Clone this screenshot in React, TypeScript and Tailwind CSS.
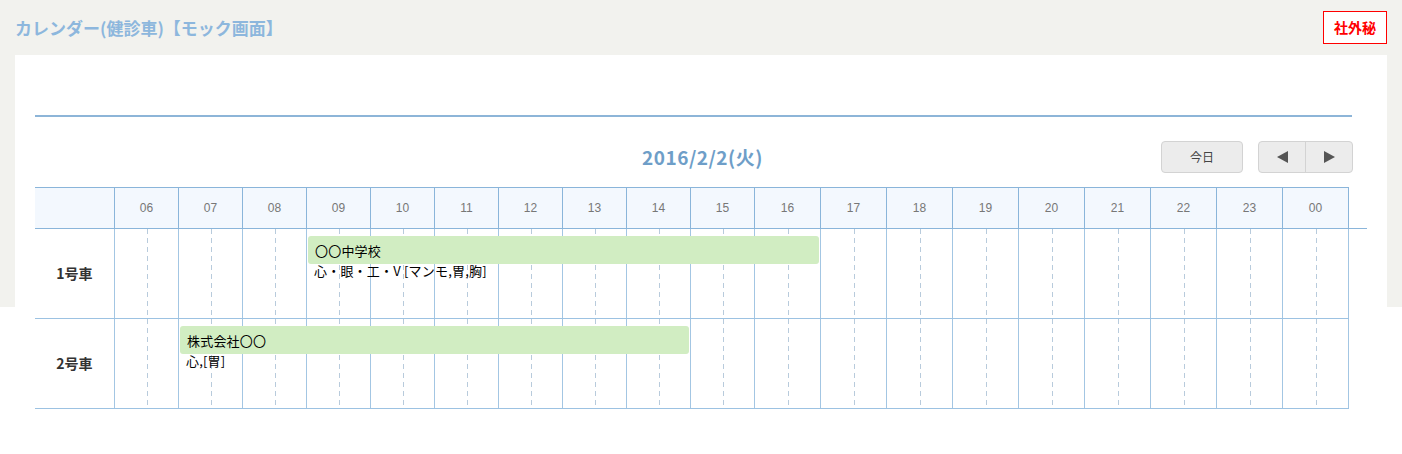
import type { ReactNode } from 'react'

const HOURS = ['06', '07', '08', '09', '10', '11', '12', '13', '14', '15', '16', '17', '18', '19', '20', '21', '22', '23', '00']

const COLS = 'grid w-max grid-cols-[79px_repeat(10,64px)_repeat(8,66px)_67px]'
const JP = "font-['Noto_Sans_CJK_JP',sans-serif]"

interface Ev {
  left: number
  width: number
  title: string
  detail: string
}

interface Car {
  name: string
  events: Ev[]
}

const CARS: Car[] = [
  { name: '1号車', events: [{ left: 273, width: 511, title: '〇〇中学校', detail: '心・眼・工・V [マンモ,胃,胸]' }] },
  { name: '2号車', events: [{ left: 145, width: 509, title: '株式会社〇〇', detail: '心,[胃]' }] },
]

function HourCell({ last, children }: { last: boolean; children?: ReactNode }) {
  return (
    <div className={`relative border-l border-[#a3c6e3] ${last ? 'border-r' : ''}`}>
      <div className="absolute left-1/2 top-0 bottom-0 w-px bg-[linear-gradient(to_bottom,#b8cbdc_5px,transparent_5px)] bg-[length:1px_9px]" />
      {children}
    </div>
  )
}

function CarRow({ car }: { car: Car }) {
  return (
    <div className={`${COLS} relative h-[90px] border-b border-[#9cc2e2]`}>
      <div className={`flex items-center justify-center text-[14px] font-bold text-[#333] ${JP}`}>{car.name}</div>
      {HOURS.map((h, i) => (
        <HourCell key={h} last={i === HOURS.length - 1} />
      ))}
      {car.events.map((ev) => (
        <div key={ev.title} className={`absolute top-[7px] text-[13px] tracking-[0.2px] text-black ${JP}`} style={{ left: ev.left, width: ev.width }}>
          <div className="h-[28px] rounded-[3px] bg-[#d1edc2] pl-[7px] leading-[29px]">{ev.title}</div>
          <div className="pl-[6px] leading-[14px]">{ev.detail}</div>
        </div>
      ))}
    </div>
  )
}

export default function App() {
  return (
    <div className="bg-[linear-gradient(to_bottom,#f2f2ee_307px,#ffffff_307px)] px-[15px] font-['Liberation_Sans','Noto_Sans_CJK_JP',sans-serif]">
      <div className="flex h-[55px] items-center justify-between">
        <h1 className={`text-[17px] font-bold text-[#8db7dd] ${JP}`}>カレンダー(健診車)【モック画面】</h1>
        <div className={`flex h-[33px] w-[64px] items-center justify-center border border-[#ff0000] bg-white text-[14px] font-bold text-[#ff0000] ${JP}`}>
          社外秘
        </div>
      </div>

      <div className="bg-white px-[20px] pt-[60px] pb-[46px]">
        <div className="mr-[15px] h-[2px] bg-[#8db5d8]" />

        <div className="mt-[24px] mr-[14px] flex h-[32px] items-center">
          <div className="flex-1" />
          <div className={`flex-1 pl-[17px] text-center text-[19px] font-bold tracking-[0.5px] text-[#6e9ec8] ${JP}`}>2016/2/2(火)</div>
          <div className="flex flex-1 justify-end gap-[15px]">
            <button className={`h-[32px] w-[82px] rounded-[4px] border border-[#d3d3d3] bg-[#ececec] text-[12px] text-[#444] ${JP}`}>
              今日
            </button>
            <div className="flex h-[32px] w-[95px] rounded-[4px] border border-[#d3d3d3] bg-[#ececec] text-[#555]">
              <button className="flex flex-1 items-center justify-center border-r border-[#d3d3d3]">
                <svg width="11" height="12" viewBox="0 0 11 12"><path d="M11 0 L0 6 L11 12 Z" fill="#555" /></svg>
              </button>
              <button className="flex flex-1 items-center justify-center">
                <svg width="11" height="12" viewBox="0 0 11 12"><path d="M0 0 L11 6 L0 12 Z" fill="#555" /></svg>
              </button>
            </div>
          </div>
        </div>

        <div className="mt-[14px]">
          <div className="flex">
            <div className={`${COLS} h-[42px] border-y border-[#8ab5da] bg-[#f3f8fe] text-[12px] text-[#777]`}>
              <div />
              {HOURS.map((h, i) => (
                <div
                  key={h}
                  className={`flex items-center justify-center border-l border-[#8ab5da] ${i === HOURS.length - 1 ? 'border-r' : ''}`}
                >
                  {h}
                </div>
              ))}
            </div>
            <div className="h-[42px] w-[19px] border-b border-[#8ab5da]" />
          </div>
          {CARS.map((c) => (
            <CarRow key={c.name} car={c} />
          ))}
        </div>
      </div>
    </div>
  )
}
